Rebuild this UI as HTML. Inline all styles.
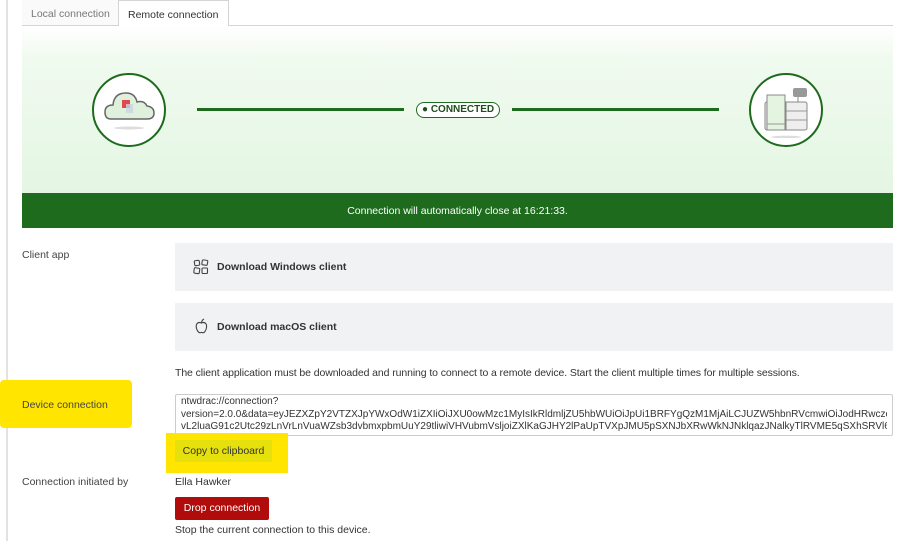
<!DOCTYPE html>
<html><head><meta charset="utf-8"><style>
*{margin:0;padding:0;box-sizing:border-box}
body{width:903px;height:541px;background:#fff;font-family:"Liberation Sans",sans-serif;color:#333;position:relative;overflow:hidden;font-size:10.5px}
.a{position:absolute;white-space:nowrap}
.vl{left:6px;top:0;width:2px;height:541px;background:#e2e2e2}
.hl{left:22px;top:25px;width:871px;height:1px;background:#d4d4d4}
.tab1{left:22px;top:0;width:97px;height:26px;background:#fafafa;border-bottom:1px solid #d4d4d4;color:#777;font-size:10.5px;padding:8px 0 0 9px}
.tab2{left:118px;top:0;width:111px;height:26px;background:#fff;border:1px solid #d4d4d4;border-bottom:none;color:#333;font-size:10.5px;padding:8px 0 0 9px}
.hero{left:22px;top:26px;width:871px;height:167px;background:linear-gradient(#fff,#f0faef 20%,#e4f6e3)}
.bar{left:22px;top:193px;width:871px;height:35px;background:#1e6b1e;color:#fff;text-align:center;line-height:37px;font-size:10.5px}
.circ{width:74px;height:74px;border:2px solid #1e6b1e;border-radius:50%;background:#fff}
.line{height:3px;background:#1e6b1e}
.badge{left:416px;top:102px;width:84px;height:16px;border:1px solid #1e6b1e;border-radius:8px;background:#fff;font-weight:bold;font-size:10px;color:#1e4d1e;padding:1px 0 0 5px}
.lbl{left:22px;color:#444;font-size:10.5px}
.btn{left:175px;width:718px;height:48px;background:#f1f2f3;font-weight:bold;font-size:10.5px;color:#333;padding-left:42px;line-height:48px}
.ta{left:175px;top:394px;width:718px;height:42px;border:1px solid #ccc;border-radius:2px;padding:1px 5px;font-size:10px;line-height:12.5px;color:#333;overflow:hidden}
.ta div{white-space:nowrap;overflow:hidden}
.hy{background:#ffe500}
</style></head><body>
<div class="a vl"></div>
<div class="a hl"></div>
<div class="a tab1">Local connection</div>
<div class="a tab2">Remote connection</div>
<div class="a hero"></div>
<div class="a circ" style="left:92px;top:73px"></div>
<svg class="a" style="left:100px;top:82px" width="58" height="56" viewBox="0 0 58 56">
<path d="M11 37 Q5 37 5 30 Q5 23 13 23 Q14 11 26 11 Q35 11 37 20 Q44 18 47 24 Q54 25 54 31 Q54 37 47 37 Z" fill="#dff1dc" stroke="#666" stroke-width="1.5"/>
<rect x="22" y="18" width="8" height="8" fill="#e0484a"/>
<rect x="26" y="22" width="7" height="9" fill="#c8d4e4" opacity=".8"/>
<ellipse cx="29" cy="46" rx="15" ry="1.5" fill="#ddd"/>
</svg>
<div class="a circ" style="left:749px;top:73px"></div>
<svg class="a" style="left:760px;top:84px" width="52" height="54" viewBox="0 0 52 54">
<rect x="5" y="18" width="42" height="28" rx="2" fill="#eee" stroke="#888"/>
<rect x="7" y="11" width="18" height="35" fill="#e4f4e0" stroke="#888"/>
<rect x="33" y="4" width="14" height="9" rx="2" fill="#999"/>
<line x1="38" y1="13" x2="38" y2="18" stroke="#888"/>
<line x1="26" y1="27" x2="47" y2="27" stroke="#999"/>
<line x1="26" y1="36" x2="47" y2="36" stroke="#999"/>
<line x1="7" y1="40" x2="25" y2="40" stroke="#999"/>
<line x1="26" y1="18" x2="26" y2="46" stroke="#888"/>
<ellipse cx="26" cy="53" rx="15" ry="1.3" fill="#ddd"/>
</svg>
<div class="a line" style="left:197px;top:108px;width:207px"></div>
<div class="a line" style="left:512px;top:108px;width:207px"></div>
<div class="a badge">● CONNECTED</div>
<div class="a bar">Connection will automatically close at 16:21:33.</div>

<div class="a lbl" style="top:249px">Client app</div>
<div class="a btn" style="top:243px">Download Windows client</div>
<svg class="a" style="left:193px;top:259px" width="16" height="16" viewBox="0 0 16 16" fill="none" stroke="#444" stroke-width="1.1"><rect x="1.5" y="1.5" width="5" height="5" rx="1" transform="rotate(-8 4 4)"/><rect x="9" y="1" width="5.5" height="5" rx="1" transform="rotate(8 11 4)"/><rect x="1" y="9" width="5.5" height="5.5" rx="1" transform="rotate(8 4 12)"/><rect x="9" y="9" width="5.5" height="5.5" rx="1"/></svg>
<div class="a btn" style="top:303px">Download macOS client</div>
<svg class="a" style="left:195px;top:318px" width="13" height="16" viewBox="0 0 13 16" fill="none" stroke="#444" stroke-width="1.1"><path d="M6.5 5 Q3 3.5 1.5 6.5 Q0.5 10 3 13.5 Q4.5 15.5 6.5 14.3 Q8.5 15.5 10 13.5 Q12.3 10 11.3 6.5 Q10 3.5 6.5 5Z"/><path d="M6.5 4.5 Q7 2 9 1"/></svg>
<div class="a" style="left:175px;top:367px;font-size:10.5px;color:#333;letter-spacing:-0.1px">The client application must be downloaded and running to connect to a remote device. Start the client multiple times for multiple sessions.</div>

<div class="a hy" style="left:0;top:380px;width:132px;height:48px;border-radius:4px"></div>
<div class="a lbl" style="top:399px">Device connection</div>
<div class="a ta"><div>ntwdrac://connection?</div><div>version=2.0.0&amp;data=eyJEZXZpY2VTZXJpYWxOdW1iZXIiOiJXU0owMzc1MyIsIkRldmljZU5hbWUiOiJpUi1BRFYgQzM1MjAiLCJUZW5hbnRVcmwiOiJodHRwczo</div><div>vL2luaG91c2Utc29zLnVrLnVuaWZsb3dvbmxpbmUuY29tliwiVHVubmVsljoiZXlKaGJHY2lPaUpTVXpJMU5pSXNJbXRwWkNJNklqazJNalkyTlRVME5qSXhSRVl6</div></div>
<div class="a hy" style="left:166px;top:433px;width:122px;height:40px"></div>
<div class="a" style="left:175px;top:440px;width:97px;height:22px;background:#e6e00c;color:#333;font-size:10.5px;text-align:center;line-height:22px">Copy to clipboard</div>

<div class="a lbl" style="top:476px">Connection initiated by</div>
<div class="a" style="left:175px;top:476px;font-size:10.5px">Ella Hawker</div>
<div class="a" style="left:175px;top:497px;width:94px;height:23px;background:#b10c0c;border-radius:2px;color:#fff;font-size:10.5px;text-align:center;line-height:23px">Drop connection</div>
<div class="a" style="left:175px;top:524px;font-size:10.5px">Stop the current connection to this device.</div>
</body></html>
